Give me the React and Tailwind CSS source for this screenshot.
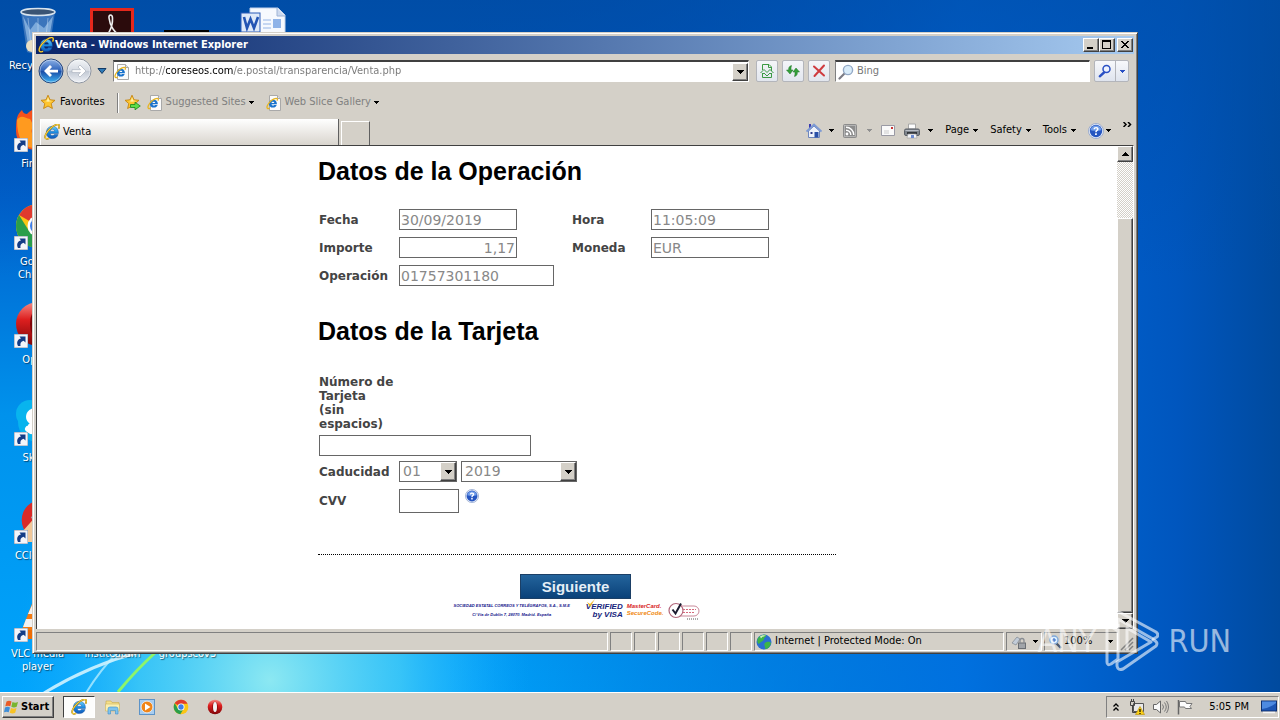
import { useId, useState } from 'react';
import clsx from 'clsx';

const RAISED = 'border border-t-white border-l-white border-r-[#404040] border-b-[#404040] bg-[#d4d0c8] shadow-[inset_-1px_-1px_0_#808080]';
const SUNKEN = 'border border-t-[#808080] border-l-[#808080] border-r-white border-b-white';

const statusBoxes = [1, 2, 3, 4, 5, 6];

const commandMenus = ['Page', 'Safety', 'Tools'];

function Arrow({ className = 'text-black' }) {
    return (
        <svg className={clsx('w-[5px] h-[3px] shrink-0', className)} viewBox="0 0 5 3" fill="currentColor" shapeRendering="crispEdges">
            <path d="M0 0h5v1H4v1H3v1H2V2H1V1H0z" />
        </svg>
    );
}

function IeLogo({ size = 16 }) {
    const id = useId();
    return (
        <svg width={size} height={size} viewBox="0 0 16 16" className="shrink-0">
            <defs>
                <linearGradient id={id} x1="0" y1="0" x2="0" y2="1">
                    <stop offset="0" stopColor="#6fd0fa" />
                    <stop offset="0.5" stopColor="#1b8be0" />
                    <stop offset="1" stopColor="#1258b8" />
                </linearGradient>
            </defs>
            <path d="M8.4 2.3c3.600 0 6 2.600 6 6.300v.9H6.200c.2 1.300 1 2.100 2.300 2.100.9 0 1.500-.4 1.900-1.100h3.700c-.7 2.500-2.800 4.100-5.700 4.100-3.600 0-6-2.500-6-6.100 0-3.700 2.400-6.200 6-6.200zM6.300 7.200h4.300c-.2-1.200-.9-2-2.100-2s-2 .8-2.200 2z" fill={`url(#${id})`} stroke="#0d4796" strokeWidth="0.4" />
            <path d="M14.600 4.600c.8-1.600 1-3 .2-3.700-1.300-1.100-5 .4-8.300 3.500C2.700 7.900.3 12.200 1.500 14.100c.6.9 2 .8 3.600.1" fill="none" stroke="#8c6a08" strokeWidth="1.7" />
            <path d="M14.600 4.600c.8-1.600 1-3 .2-3.700-1.300-1.100-5 .4-8.300 3.500C2.700 7.900.3 12.200 1.500 14.100c.6.9 2 .8 3.600.1" fill="none" stroke="#f8cf3c" strokeWidth="1.1" />
        </svg>
    );
}

function IePage() {
    return (
        <svg width="16" height="16" viewBox="0 0 16 16" className="shrink-0">
            <path d="M3.500.5h8l3 3v12h-11z" fill="#fbfbfb" stroke="#a9a9a9" />
            <path d="M11.500.5v3h3" fill="#e4e4e4" stroke="#a9a9a9" />
            <path d="M6.800 4.700c2.500 0 4.100 1.600 4.100 4.100v.5H5.500c.1.800.7 1.300 1.500 1.300.5 0 .9-.2 1.200-.6h2.500c-.5 1.700-1.900 2.600-3.800 2.600-2.500 0-4-1.500-4-3.900s1.500-4 3.900-4zM5.500 8h2.800c-.1-.8-.6-1.300-1.300-1.300-.8 0-1.400.5-1.500 1.300z" fill="#1a73cc" />
            <path d="M11 5.800c.5-1.100.5-1.900 0-2.300C9.700 2.800 5.800 4.600 3.500 7.300 1.200 10 .4 12.600 1.500 13.400c.5.300 1.300.1 2.100-.3" fill="none" stroke="#e6b422" strokeWidth="1.300" />
        </svg>
    );
}

function NavArrow({ active, label }) {
    const id = useId();
    return (
        <button type="button" aria-label={label} className="size-[26px] shrink-0">
            <svg width="26" height="26" viewBox="0 0 26 26">
                <defs>
                    <linearGradient id={id} x1="0" y1="0" x2="0" y2="1">
                        <stop offset="0" stopColor={active ? '#8fb2e6' : '#f4f6f8'} />
                        <stop offset="0.48" stopColor={active ? '#2d62ba' : '#d5dae2'} />
                        <stop offset="0.52" stopColor={active ? '#1a4ea8' : '#c2c9d4'} />
                        <stop offset="1" stopColor={active ? '#3fb4f4' : '#f2f4f8'} />
                    </linearGradient>
                </defs>
                <circle cx="13" cy="13" r="12" fill={`url(#${id})`} stroke={active ? '#28477c' : '#8f96a2'} />
                <circle cx="13" cy="13" r="11" fill="none" stroke="#fff" strokeOpacity="0.4" />
                {active
                    ? <path d="M6 13l6-6 2 2-2.500 2.700H20v2.700h-8.500L14 17l-2 2z" fill="#fff" />
                    : <path d="M20 13l-6-6-2 2 2.500 2.700H6v2.700h8.500L12 17l2 2z" fill="#fff" stroke="#aab1bd" strokeWidth="0.7" />}
            </svg>
        </button>
    );
}

function Star({ add }) {
    return (
        <svg width="17" height="17" viewBox="0 0 17 17" className="shrink-0">
            <path d="M8 1.200l2 4.600 5 .5-3.800 3.300 1.200 4.900L8 12l-4.400 2.500 1.200-4.900L1 6.300l5-.5z" fill="#fdc530" stroke="#c58410" strokeWidth="0.9" strokeLinejoin="round" />
            <path d="M8 3l1.200 3.500 3 .5-4.200.8L5 7l2-.5z" fill="#fff1a8" />
            {add && <path d="M6.500 10.500h4.500V8.200l5.300 3.800-5.300 3.800v-2.300H6.500z" fill="#5fdc4a" stroke="#16871b" strokeWidth="0.8" />}
        </svg>
    );
}

function HelpIcon({ size }) {
    return (
        <svg width={size} height={size} viewBox="0 0 16 16" className="shrink-0">
            <circle cx="8" cy="8" r="7.500" fill="#e9eef8" stroke="#8aa0cc" strokeWidth="0.8" />
            <circle cx="8" cy="8" r="6.200" fill="#2555c0" />
            <path d="M2.500 7a5.600 5.600 0 0 1 11 0c-3 1.200-8 1.200-11 0z" fill="#6f9ce8" />
            <path d="M5.500 6.300C5.600 4.700 6.600 4 8.100 4c1.500 0 2.500.8 2.500 2.100 0 1.700-1.900 1.700-1.900 3.200H7.200c0-2 1.700-2.200 1.700-3.200 0-.5-.3-.8-.9-.8s-.9.400-1 1zM7.100 10.300h1.700V12H7.100z" fill="#fff" />
        </svg>
    );
}

function ChromeLogo({ size }) {
    return (
        <svg width={size} height={size} viewBox="0 0 48 48" className="shrink-0">
            <circle cx="24" cy="24" r="22" fill="#fbc514" />
            <path d="M24 24L5 13a22 22 0 0 1 38.500 1H24z" fill="#e03a2e" />
            <path d="M5 13a22 22 0 0 0 17 32.900L32 29l-17 0z" fill="#2a9e4b" />
            <circle cx="24" cy="24" r="10.500" fill="#fff" />
            <circle cx="24" cy="24" r="8" fill="#3f7ee8" />
        </svg>
    );
}

function OperaLogo({ size }) {
    const id = useId();
    return (
        <svg width={size} height={size} viewBox="0 0 48 48" className="shrink-0">
            <defs>
                <linearGradient id={id} x1="0" y1="0" x2="0" y2="1">
                    <stop offset="0" stopColor="#f58a84" />
                    <stop offset="0.4" stopColor="#dd1f1f" />
                    <stop offset="1" stopColor="#7d0508" />
                </linearGradient>
            </defs>
            <ellipse cx="24" cy="24" rx="22" ry="22" fill={`url(#${id})`} />
            <ellipse cx="24" cy="24" rx="8" ry="16" fill="#7d0508" />
            <ellipse cx="24" cy="24" rx="6" ry="15" fill="#f4f4f4" />
        </svg>
    );
}

const desktopArt = {
    bin: (
        <svg viewBox="0 0 48 48" className="size-12">
            <path d="M7 6l6 40c6 2 16 2 22 0l6-40z" fill="#4a7fc0" fillOpacity="0.8" />
            <path d="M9 10l6 34c5 2 13 2 18 0l6-34-9 12-8-6-6 8z" fill="#a9cdf0" fillOpacity="0.6" />
            <ellipse cx="24" cy="6" rx="17" ry="3.500" fill="#3a5474" stroke="#d8e4ee" strokeWidth="1.500" />
            <path d="M14 12l3 28M24 12v30M34 12l-3 28" stroke="#e4f1fc" strokeOpacity="0.4" />
            <circle cx="18" cy="40" r="6" fill="#e8dfc4" />
        </svg>
    ),
    acrobat: (
        <svg viewBox="0 0 48 48" className="size-12">
            <rect x="1" y="2" width="44" height="44" fill="#e5281c" />
            <rect x="4" y="5" width="38" height="41" fill="#2b0b0c" />
            <path d="M13 34c5-3 11-12 10.500-22-.2-4-4-4-3.500 0 .8 8 6 16 13 18 3 .8 3-2 0-2-8 0-15 2-20 6z" fill="none" stroke="#eee" strokeWidth="1.600" />
        </svg>
    ),
    black: (
        <svg viewBox="0 0 48 48" className="size-12">
            <rect x="0" y="24" width="45" height="24" fill="#000" />
        </svg>
    ),
    word: (
        <svg viewBox="0 0 48 48" className="size-12">
            <path d="M11 2h28l7 7v39H11z" fill="#f6f9fe" stroke="#c5d3ea" />
            <path d="M38 2v8h8" fill="#ccd9ee" stroke="#9fb4d6" />
            <path d="M24 14h8M24 18h8M24 22h8" stroke="#b6cbee" strokeWidth="1.500" />
            <rect x="34" y="13" width="8" height="9" fill="#8fb3e8" />
            <rect x="2" y="7" width="19" height="19" fill="#dfe9f8" stroke="#2c5cb8" />
            <path d="M5 11l3 11 3.500-9 3.500 9 4-11" fill="none" stroke="#2455b4" strokeWidth="2.600" />
        </svg>
    ),
    firefox: (
        <svg viewBox="0 0 48 48" className="size-12">
            <path d="M3 14c1-4 3-6 5-8 1 3 3 4 5 4 5-6 14-8 22-4 8 4 12 12 10 22-2 11-11 18-22 18C10 46 2 38 2 27c0-5 0-9 1-13z" fill="#f4511e" />
            <path d="M3 16c4-6 8-2 13-1 2 3 2 6 6 7-5 1-6 6-2 10 5 4 12 3 16-2-1 9-8 15-17 14C9 43 3 34 3 16z" fill="#ff9a1f" />
            <path d="M22 12c8-3 17 3 18 12-3-3-6-4-9-3 1-4-3-8-9-9z" fill="#6f35b8" />
        </svg>
    ),
    chrome: <ChromeLogo size={48} />,
    opera: <OperaLogo size={48} />,
    skype: (
        <svg viewBox="0 0 48 48" className="size-12">
            <circle cx="16" cy="16" r="14" fill="#08b4ee" />
            <circle cx="31" cy="31" r="15" fill="#08b4ee" />
            <circle cx="24" cy="24" r="20" fill="#08b4ee" />
            <path d="M34 16c-5-6-19-5-19 3 0 8 17 4 17 10 0 5-10 5-15-1M14 31l3 2" fill="none" stroke="#fff" strokeWidth="6" strokeLinecap="round" />
        </svg>
    ),
    ccleaner: (
        <svg viewBox="0 0 48 48" className="size-12">
            <path d="M42 10A20 20 0 1 0 42 38l-8-7a9 9 0 1 1 0-14z" fill="#d92a27" />
            <path d="M24 18l6 8-7 8 4 12H10L8 36z" fill="#f1c89a" />
            <path d="M20 16l8 6-2 4-9-4z" fill="#9cb9d8" />
        </svg>
    ),
    vlc: (
        <svg viewBox="0 0 48 48" className="size-12">
            <path d="M21 2h6l14 36H7z" fill="#f47b11" />
            <path d="M18 11h12l4 9H14zM12 25h24l3 8H9z" fill="#f2f2f2" />
            <path d="M4 36h40v9H4z" fill="#ee6c05" />
        </svg>
    )
};

const desktopIcons = [
    { art: 'bin', label: 'Recycle Bin', cell: 'col-start-1 row-start-1' },
    { art: 'firefox', label: 'Firefox', cell: 'col-start-1 row-start-2', shortcut: true },
    { art: 'chrome', label: 'Google Chrome', cell: 'col-start-1 row-start-3', shortcut: true },
    { art: 'opera', label: 'Opera', cell: 'col-start-1 row-start-4', shortcut: true },
    { art: 'skype', label: 'Skype', cell: 'col-start-1 row-start-5', shortcut: true },
    { art: 'ccleaner', label: 'CCleaner', cell: 'col-start-1 row-start-6', shortcut: true },
    { art: 'vlc', label: 'VLC media player', cell: 'col-start-1 row-start-7', shortcut: true },
    { art: 'acrobat', cell: 'col-start-2 row-start-1' },
    { label: 'institcatum', cell: 'col-start-2 row-start-7' },
    { art: 'black', cell: 'col-start-3 row-start-1' },
    { label: 'groupscov3', cell: 'col-start-3 row-start-7' },
    { art: 'word', cell: 'col-start-4 row-start-1' }
];

function DesktopIcon({ icon }) {
    return (
        <div className={clsx('relative flex flex-col items-center', icon.cell)}>
            <div className="size-12">{icon.art && desktopArt[icon.art]}</div>
            {icon.shortcut && (
                <svg viewBox="0 0 14 14" className="absolute left-[14px] top-[34px] size-[14px]">
                    <path d="M0 0h14v14H0z" fill="#f3f5fa" stroke="#8a94a8" />
                    <path d="M4 12c-2-4 0-7 3-7.500L5.500 2.500h6v6L9.600 6.800C7 7.500 6 9 6.500 12z" fill="#143c86" />
                </svg>
            )}
            <span className="mt-[5px] w-16 text-center text-white leading-[13px] [text-shadow:1px_1px_1px_#0008]">{icon.label}</span>
        </div>
    );
}

function Wallpaper() {
    return (
        <svg className="absolute inset-0 size-full" viewBox="0 0 1280 692" preserveAspectRatio="none">
            <defs>
                <linearGradient id="sky" x1="0" y1="0" x2="0" y2="1">
                    <stop offset="0" stopColor="#004ca6" />
                    <stop offset="0.28" stopColor="#0060cc" />
                    <stop offset="0.6" stopColor="#0092ec" />
                    <stop offset="1" stopColor="#00a4fc" />
                </linearGradient>
                <linearGradient id="dusk" x1="0" y1="0" x2="1" y2="0">
                    <stop offset="0.35" stopColor="#0048b0" stopOpacity="0" />
                    <stop offset="0.75" stopColor="#0064d8" stopOpacity="0.8" />
                    <stop offset="0.92" stopColor="#0056be" />
                    <stop offset="1" stopColor="#004a9e" />
                </linearGradient>
                <linearGradient id="top" x1="0" y1="0" x2="0" y2="1">
                    <stop offset="0" stopColor="#004ea8" stopOpacity="0.6" />
                    <stop offset="0.4" stopColor="#004ea8" stopOpacity="0" />
                </linearGradient>
                <radialGradient id="glow" gradientUnits="userSpaceOnUse" cx="270" cy="680" r="260">
                    <stop offset="0" stopColor="#8ce8f2" />
                    <stop offset="0.5" stopColor="#4fd2f6" stopOpacity="0.7" />
                    <stop offset="1" stopColor="#18a8ff" stopOpacity="0" />
                </radialGradient>
            </defs>
            <rect width="1280" height="692" fill="url(#sky)" />
            <rect width="1280" height="692" fill="url(#dusk)" />
            <rect width="1280" height="692" fill="url(#top)" />
            <rect width="1280" height="692" fill="url(#glow)" />
            <path d="M44 693Q90 665 140 652" fill="none" stroke="#e8fbff" strokeWidth="3" strokeOpacity="0.8" />
            <path d="M86 693Q100 670 118 652" fill="none" stroke="#c8f4ff" strokeWidth="2" strokeOpacity="0.7" />
            <path d="M118 692Q136 670 156 652" fill="none" stroke="#8df56a" strokeWidth="3" />
        </svg>
    );
}

function Field({ label, value, width, align }) {
    const id = useId();
    return (
        <>
            <label htmlFor={id} className="pl-px">{label}</label>
            <div>
                <input
                    id={id}
                    defaultValue={value}
                    readOnly
                    className={clsx('h-[21px] border border-[#666] bg-white px-px text-[14px] font-normal text-[#888] outline-none', width, align)}
                />
            </div>
        </>
    );
}

function Dropdown({ id, label, options, width }) {
    return (
        <div className={clsx('flex h-[21px] border border-[#666] bg-white', width)}>
            <select id={id} aria-label={label} className="min-w-0 flex-1 appearance-none pl-[3px] text-[14px] font-normal leading-[19px] text-[#888] outline-none">
                {options.map(o => <option key={o}>{o}</option>)}
            </select>
            <span className={clsx('flex w-4 items-center justify-center', RAISED)}>
                <svg className="h-1 w-[7px]" viewBox="0 0 7 4" shapeRendering="crispEdges"><path d="M0 0h7v1H6v1H5v1H4v1H3V3H2V2H1V1H0z" /></svg>
            </span>
        </div>
    );
}

function PaymentPage() {
    const [card, setCard] = useState('');
    const [cvv, setCvv] = useState('');

    return (
        <main className="flex-1 overflow-hidden bg-white pt-[9px] text-[#444]">
            <form onSubmit={e => e.preventDefault()} className="mx-auto w-[518px] max-w-full font-['DejaVu_Sans',sans-serif] text-[12px] font-bold leading-[14px]">
                <h1 className="font-['Liberation_Sans',sans-serif] text-[25px] font-bold leading-[32px] text-black">Datos de la Operación</h1>
                <div className="mt-[22px] grid grid-cols-[81px_172px_80px_118px] items-center gap-y-[7px]">
                    <Field label="Fecha" value="30/09/2019" width="w-[118px]" />
                    <Field label="Hora" value="11:05:09" width="w-[118px]" />
                    <Field label="Importe" value="1,17" width="w-[118px]" align="text-right" />
                    <Field label="Moneda" value="EUR" width="w-[118px]" />
                    <Field label="Operación" value="01757301180" width="w-[155px]" />
                </div>

                <h1 className="mt-[29px] font-['Liberation_Sans',sans-serif] text-[25px] font-bold leading-[32px] text-black">Datos de la Tarjeta</h1>
                <div className="mt-[28px] flex flex-col items-start pl-px">
                    <label htmlFor="card" className="w-[75px]">Número de Tarjeta (sin espacios)</label>
                    <input
                        id="card"
                        value={card}
                        onChange={e => setCard(e.target.value)}
                        autoFocus
                        className="mt-1 h-[21px] w-[212px] border border-[#666] px-px text-[14px] font-normal outline-none"
                    />
                    <div className="mt-[5px] flex items-center">
                        <label htmlFor="month" className="w-[80px]">Caducidad</label>
                        <Dropdown id="month" label="Mes" options={['01', '02', '03', '04', '05', '06', '07', '08', '09', '10', '11', '12']} width="w-[58px]" />
                        <div className="w-1" />
                        <Dropdown id="year" label="Año" options={['2019', '2020', '2021', '2022', '2023']} width="w-[116px]" />
                    </div>
                    <div className="mt-[7px] flex items-start">
                        <label htmlFor="cvv" className="w-[80px] leading-[24px]">CVV</label>
                        <input
                            id="cvv"
                            value={cvv}
                            onChange={e => setCvv(e.target.value)}
                            className="h-6 w-[60px] border border-[#666] px-px text-[14px] font-normal outline-none"
                        />
                        <button type="button" aria-label="CVV" className="ml-[6px]"><HelpIcon size={14} /></button>
                    </div>
                </div>

                <div className="mt-[41px] border-t border-dotted border-black pt-[19px] pr-[3px] text-center">
                    <button type="submit" className="h-[25px] w-[111px] border border-[#1b3f66] bg-linear-to-b from-[#23649c] to-[#0a4179] font-['Liberation_Sans',sans-serif] text-[15px] font-bold text-[#e4eef6]">Siguiente</button>
                </div>
                <div className="flex h-6 items-start justify-center font-['Liberation_Sans',sans-serif] italic">
                    <p className="mt-[2px] whitespace-nowrap text-center text-[4px] leading-[9px] text-[#14148c]">
                        SOCIEDAD ESTATAL CORREOS Y TELÉGRAFOS, S.A., S.M.E<br />C/ Vía de Dublín 7, 28070. Madrid. España
                    </p>
                    <div className="relative ml-4 mt-1 text-right text-[8px] leading-[8px] text-[#16247c]">
                        <svg viewBox="0 0 10 8" className="absolute -top-1 left-0 w-[10px] h-2"><path d="M1 3l3 2 5-5-5 8z" fill="#f3b51b" /></svg>
                        <p>VERIFIED</p>
                        <p>by VISA</p>
                    </div>
                    <div className="ml-1 mt-1 text-[6px] leading-[7px]">
                        <p className="text-[#d81e1e]">MasterCard.</p>
                        <p className="text-[#f08a12]">SecureCode.</p>
                    </div>
                    <svg viewBox="0 0 32 20" className="ml-[5px] mt-[2px] h-5 w-8">
                        <rect x="6" y="5" width="25" height="10" rx="5" fill="#fff" stroke="#c98a9a" />
                        <circle cx="8" cy="9.500" r="7" fill="#fff" stroke="#b2687c" strokeWidth="1.200" />
                        <path d="M4.500 8.500l3 4L13 2.500" fill="none" stroke="#1c1c30" strokeWidth="2" />
                        <path d="M15 8.500h13M15 11.500h11" stroke="#d56a7d" strokeDasharray="2 1" />
                        <path d="M19 18h12" stroke="#555" strokeDasharray="1 1" />
                    </svg>
                </div>
            </form>
        </main>
    );
}

function Scrollbar() {
    return (
        <div className="flex w-4 shrink-0 flex-col bg-[repeating-conic-gradient(#fff_0_25%,#d4d0c8_0_50%)] bg-size-[2px_2px]">
            <button type="button" aria-label="Scroll up" className={clsx('flex h-4 items-center justify-center', RAISED)}>
                <svg className="h-1 w-[7px]" viewBox="0 0 7 4" shapeRendering="crispEdges"><path d="M3 0h1v1h1v1h1v1h1v1H0V3h1V2h1V1h1z" /></svg>
            </button>
            <div className={clsx('mt-[56px] flex-1', RAISED)} />
            <button type="button" aria-label="Scroll down" className={clsx('flex h-4 items-center justify-center', RAISED)}>
                <svg className="h-1 w-[7px]" viewBox="0 0 7 4" shapeRendering="crispEdges"><path d="M0 0h7v1H6v1H5v1H4v1H3V3H2V2H1V1H0z" /></svg>
            </button>
        </div>
    );
}

function TitleBar() {
    return (
        <div className="flex h-[18px] items-center bg-linear-to-r from-[#0a246a] to-[#a6caf0] pl-[2px] pr-px">
            <IeLogo />
            <h2 className="ml-px flex-1 text-[11px] font-bold text-white">Venta - Windows Internet Explorer</h2>
            <button type="button" aria-label="Minimize" className={clsx('h-[14px] w-4', RAISED)}>
                <svg viewBox="0 0 14 12" className="h-3 w-[14px]" shapeRendering="crispEdges"><path d="M3 8h6v2H3z" /></svg>
            </button>
            <button type="button" aria-label="Maximize" className={clsx('h-[14px] w-4', RAISED)}>
                <svg viewBox="0 0 14 12" className="h-3 w-[14px]" shapeRendering="crispEdges"><path d="M2 1h9v9H2zM3 3v6h7V3z" fillRule="evenodd" /></svg>
            </button>
            <button type="button" aria-label="Close" className={clsx('ml-[2px] h-[14px] w-4', RAISED)}>
                <svg viewBox="0 0 14 12" className="h-3 w-[14px]" shapeRendering="crispEdges"><path d="M3 2h2v1h1v1h2V3h1V2h2v1h-1v1H9v1H8v1h1v1h1v1h1v1H9V8H8V7H6v1H5v1H3V8h1V7h1V6h1V5H5V4H4V3H3z" /></svg>
            </button>
        </div>
    );
}

function ToolButton({ label, children }) {
    return (
        <button type="button" aria-label={label} className="flex size-[22px] shrink-0 items-center justify-center rounded-xs border border-[#b3b5bb] bg-linear-to-b from-[#f4f5f8] to-[#e2e6ee]">
            {children}
        </button>
    );
}

function NavBar() {
    return (
        <div className="flex h-[34px] items-center pl-[2px] pr-[5px]">
            <NavArrow active label="Back" />
            <div className="w-[2px]" />
            <NavArrow label="Forward" />
            <svg viewBox="0 0 10 6" className="mx-[5px] h-[6px] w-[10px] shrink-0"><path d="M1 .5h8L5 5.500z" fill="#2f7bb8" stroke="#123a66" /></svg>
            <div className="ml-px flex h-[22px] flex-1 items-center border border-t-2 border-[#808080] border-t-[#404040] border-r-white border-b-white bg-white">
                <IePage />
                <input
                    type="text"
                    aria-label="Address"
                    defaultValue="http://coreseos.com/e.postal/transparencia/Venta.php"
                    className="ml-[5px] min-w-0 flex-1 bg-[linear-gradient(90deg,#777_31px,#000_31px,#000_98px,#777_98px)] bg-clip-text text-transparent outline-none"
                />
                <button type="button" aria-label="Address history" className={clsx('flex h-[18px] w-4 items-center justify-center', RAISED)}>
                    <svg className="h-1 w-[7px]" viewBox="0 0 7 4" shapeRendering="crispEdges"><path d="M0 0h7v1H6v1H5v1H4v1H3V3H2V2H1V1H0z" /></svg>
                </button>
            </div>
            <div className="ml-[7px] flex gap-1">
                <ToolButton label="Compatibility View">
                    <svg viewBox="0 0 14 14" className="size-[14px]"><path d="M2.500 6V.5h6.500l2.500 2.500V7M8.500.5v3h3M2.500 9v4.500h9V9M.5 9l3.500-3.500L7 8.500l3-3 3.500 3.500M2 11l2-2 3 3 3-3 2 2" fill="none" stroke="#3c9a44" /></svg>
                </ToolButton>
                <ToolButton label="Refresh">
                    <svg viewBox="0 0 16 14" className="h-[14px] w-4"><path d="M6.500 1.500C4 2 3.500 4 3.700 6H1.500L5 10l3-4H6c-.1-1.500 0-3 .5-4.500zM9.500 12.500C12 12 12.500 10 12.300 8h2.200L11 4 8 8h2c.1 1.500 0 3-.5 4.500z" fill="#35a03a" stroke="#1c7525" strokeWidth="0.500" /></svg>
                </ToolButton>
                <ToolButton label="Stop">
                    <svg viewBox="0 0 14 14" className="size-[14px]"><path d="M2 2.500l10 9M12 1.500L2.500 12" stroke="#cf3b3f" strokeWidth="2" strokeLinecap="round" /></svg>
                </ToolButton>
            </div>
            <div className="ml-[5px] flex h-[22px] w-[255px] items-center border border-t-2 border-[#808080] border-t-[#404040] border-r-white border-b-white bg-white pl-[2px]">
                <svg viewBox="0 0 16 16" className="size-4 shrink-0">
                    <path d="M6.500 9.500L1.500 14.500" stroke="#7c7c84" strokeWidth="2.200" strokeLinecap="round" />
                    <circle cx="10" cy="6" r="4.600" fill="#d9ecf9" stroke="#93a9c6" strokeWidth="1.400" />
                </svg>
                <input type="text" aria-label="Search" placeholder="Bing" className="ml-[3px] min-w-0 flex-1 outline-none placeholder:text-[#777]" />
            </div>
            <div className="ml-1 flex h-[22px] rounded-xs border border-[#b3b5bb] bg-linear-to-b from-[#f7f8fb] to-[#dfe4ee]">
                <button type="button" aria-label="Run search" className="flex w-5 items-center justify-center">
                    <svg viewBox="0 0 14 14" className="size-[14px]"><path d="M6 8.500L1.800 12.300" stroke="#2a50c4" strokeWidth="2.400" strokeLinecap="round" /><circle cx="8.500" cy="5" r="3.500" fill="#eef3ff" stroke="#2a50c4" strokeWidth="1.500" /></svg>
                </button>
                <button type="button" aria-label="Search options" className="flex w-[13px] items-center justify-center border-l border-[#b3b5bb]"><Arrow className="text-[#2a50c4]" /></button>
            </div>
        </div>
    );
}

function FavoritesBar() {
    return (
        <div className="flex h-[28px] items-center pl-1 pt-px">
            <button type="button" className="flex items-center gap-[3px]"><Star />Favorites</button>
            <div className="ml-[12px] h-5 w-[2px] border-l border-r border-l-[#808080] border-r-white" />
            <button type="button" aria-label="Add to favorites" className="ml-[5px]"><Star add /></button>
            <button type="button" className="ml-[6px] flex items-center gap-[3px] text-[#808080]"><IePage />Suggested Sites<Arrow /></button>
            <button type="button" className="ml-[12px] flex items-center gap-[3px] text-[#808080]"><IePage />Web Slice Gallery<Arrow /></button>
        </div>
    );
}

function TabBar() {
    return (
        <div className="flex h-[29px] items-end justify-between pl-1">
            <div className="flex items-end gap-[2px]">
                <button type="button" className="flex h-[26px] w-[299px] items-center border-r border-[#606060] bg-linear-to-b from-white to-[#d9d5ce] pl-1 shadow-[inset_1px_1px_0_#fff]"><IeLogo /><span className="ml-[3px]">Venta</span></button>
                <button type="button" aria-label="New tab" className="h-[24px] w-[29px] border border-b-0 border-t-white border-l-white border-r-[#606060]" />
            </div>
            <div className="flex h-full items-center gap-3 pr-[2px]">
                <div className="flex items-center gap-[9px]">
                    <button type="button" aria-label="Home" className="flex items-center gap-[7px]">
                        <svg viewBox="0 0 16 16" className="size-4">
                            <path d="M3 1h2v4H3z" fill="#3a3ab0" />
                            <path d="M2.500 8v6.500h11V8L8 3z" fill="#eef2fb" stroke="#6e86bc" />
                            <path d="M.5 8.500L8 1.500l7.500 7" fill="none" stroke="#7d9ad4" strokeWidth="1.800" />
                            <path d="M8.500 9h4v5.500h-4z" fill="#2a50a8" />
                            <path d="M4.500 9h2v2h-2z" fill="#2a3a8c" />
                        </svg>
                        <Arrow />
                    </button>
                    <button type="button" aria-label="Feeds" className="flex items-center gap-[10px]">
                        <svg viewBox="0 0 14 14" className="size-[14px]">
                            <rect width="14" height="14" rx="2" fill="#8c8c8c" />
                            <rect x="1.500" y="1.500" width="11" height="11" fill="none" stroke="#c4c4c4" strokeWidth="0.700" />
                            <circle cx="4" cy="10" r="1.400" fill="#fff" />
                            <path d="M3 6.200A4.800 4.800 0 0 1 7.800 11M3 3.200A7.800 7.800 0 0 1 10.800 11" fill="none" stroke="#fff" strokeWidth="1.400" />
                        </svg>
                        <Arrow className="text-[#909090]" />
                    </button>
                    <button type="button" aria-label="Mail">
                        <svg viewBox="0 0 14 11" className="h-[11px] w-[14px]"><path d="M.5.500h13v10H.5z" fill="#fafafa" stroke="#9a9aa4" /><path d="M10 2h2v2h-2z" fill="#c93434" /><path d="M3 6h5M3 8h5" stroke="#ccc" /></svg>
                    </button>
                    <button type="button" aria-label="Print" className="flex items-center gap-2">
                        <svg viewBox="0 0 16 16" className="size-4">
                            <path d="M4.500 1h7v5h-7z" fill="#fdfdfd" stroke="#a8a8a8" />
                            <rect x="0.500" y="6" width="15" height="6.500" rx="1.500" fill="#7f858c" stroke="#5c6168" />
                            <path d="M1.500 7.500h13" stroke="#b9bec6" />
                            <path d="M3 9h10v2H3z" fill="#33373c" />
                            <path d="M4 11h8l1 4H3z" fill="#f4f6fa" stroke="#9b9b9b" strokeWidth="0.600" />
                            <path d="M7 12h3v3H7z" fill="#6c8bd0" />
                        </svg>
                        <Arrow />
                    </button>
                </div>
                {commandMenus.map(name => (
                    <button key={name} type="button" className="flex items-center gap-[4px]">{name}<Arrow /></button>
                ))}
                <button type="button" aria-label="Help" className="flex items-center gap-[2px]"><HelpIcon size={16} /><Arrow /></button>
                <button type="button" aria-label="More commands" className="mb-3">
                    <svg viewBox="0 0 9 5" className="h-[5px] w-[9px]"><path d="M.5 0L3 2.500.5 5M5 0l2.500 2.500L5 5" fill="none" stroke="#000" strokeWidth="1.500" /></svg>
                </button>
            </div>
        </div>
    );
}

function StatusBar() {
    return (
        <div className="flex h-[19px] gap-[2px]">
            <div className={clsx('flex-1', SUNKEN)} />
            {statusBoxes.map(n => <div key={n} className={clsx('w-[22px]', SUNKEN)} />)}
            <div className={clsx('flex w-[250px] items-center gap-[3px] pl-px', SUNKEN)}>
                <svg viewBox="0 0 16 16" className="size-4">
                    <circle cx="8" cy="8" r="7.500" fill="#2a6fd2" />
                    <path d="M2 4c2-3 6-4 8-3 1 2-2 2-2 4S4 8 3 10C1 9 1 6 2 4zM9 9c3-2 5-1 6 0-1 4-3 6-6 6 1-2-2-4 0-6z" fill="#3db547" />
                    <path d="M4 2.500c2-1.500 5-1.500 6-.5-2 0-4 1-5 2.500z" fill="#d4f0c0" />
                </svg>
                Internet | Protected Mode: On
            </div>
            <button type="button" aria-label="Filtering" className={clsx('flex w-[36px] items-center justify-center gap-[6px]', SUNKEN)}>
                <svg viewBox="0 0 16 16" className="size-4">
                    <path d="M1 9L6 3l3 2-4 6z" fill="#c2ccd8" stroke="#7c858f" strokeWidth="0.700" />
                    <rect x="7.500" y="9" width="7" height="5.500" fill="#a0a4a9" stroke="#6b6f74" />
                    <path d="M9 9V6.500a2 2 0 0 1 4 0V9" fill="none" stroke="#888c92" strokeWidth="1.300" />
                </svg>
                <Arrow />
            </button>
            <button type="button" className={clsx('flex w-[74px] items-center gap-[1px] pl-[2px]', SUNKEN)}>
                <svg viewBox="0 0 16 16" className="size-4 shrink-0">
                    <path d="M9 9l5 5" stroke="#4c586c" strokeWidth="2.400" />
                    <circle cx="7" cy="6" r="4" fill="#dcefff" stroke="#7fa8d8" strokeWidth="1.400" />
                    <path d="M5 6h4M7 4v4" stroke="#2b67c4" />
                </svg>
                <span className="flex-1 text-left">100%</span>
                <span className="pr-1"><Arrow /></span>
            </button>
            <svg viewBox="0 0 14 19" className="h-[19px] w-[14px]"><path d="M1 18L13 6M5 18l8-8M9 18l4-4" stroke="#808080" strokeWidth="1.500" /></svg>
        </div>
    );
}

function Taskbar() {
    return (
        <footer className="flex h-[28px] items-center border-t border-white bg-[#d4d0c8] pl-[2px] pr-px pt-px shadow-[0_-1px_0_#d4d0c8]">
            <button type="button" className={clsx('flex h-[22px] w-[52px] items-center gap-px pl-px font-bold', RAISED)}>
                <svg viewBox="0 0 16 16" className="size-4 shrink-0">
                    <path d="M2.500 2.500c2-1 3.500-.8 5 0L6.300 7.300c-1.500-.8-3-.8-5 0z" fill="#ea5b25" />
                    <path d="M8.500 3c2 .9 3.500.8 5.500 0l-1.300 4.800c-2 .9-3.600.8-5.400 0z" fill="#79b52f" />
                    <path d="M1 8.500c2-.9 3.500-.8 5 0l-1.300 4.800c-1.500-.8-3-.8-4.700 0z" fill="#3f8ed8" />
                    <path d="M7 9c2 .9 3.500.8 5.500 0l-1.300 4.800c-2 .9-3.600.8-5.400 0z" fill="#f8c325" />
                </svg>
                Start
            </button>
            <button type="button" aria-label="Internet Explorer" className="ml-[9px] flex h-[22px] w-[32px] items-center justify-center border border-[#404040] border-r-white border-b-white bg-[#fdfdfc]"><IeLogo /></button>
            <div className="ml-[10px] flex items-center gap-[18px]">
                <button type="button" aria-label="Windows Explorer">
                    <svg viewBox="0 0 16 16" className="size-4">
                        <path d="M1 2h5l1 1.500h7V7H1z" fill="#f6e08a" stroke="#c8a94b" strokeWidth="0.600" />
                        <path d="M.500 5h14v7H.5z" fill="#fbefb0" stroke="#cdb25a" strokeWidth="0.600" />
                        <path d="M3 15V10q0-2 2-2h6q2 0 2 2v5h-2.500v-3.500h-5V15z" fill="#7fc3ee" stroke="#3c8fc9" strokeWidth="0.600" />
                    </svg>
                </button>
                <button type="button" aria-label="Media Player">
                    <svg viewBox="0 0 16 16" className="size-4">
                        <rect x="0.500" y="0.500" width="15" height="15" fill="#a8cdf0" stroke="#5c93c8" />
                        <circle cx="8" cy="8" r="5.800" fill="#f08519" stroke="#fff" strokeWidth="0.600" />
                        <path d="M6 4.500v7L11.500 8z" fill="#fff" />
                    </svg>
                </button>
                <button type="button" aria-label="Google Chrome"><ChromeLogo size={16} /></button>
                <button type="button" aria-label="Opera"><OperaLogo size={16} /></button>
            </div>
            <div className={clsx('ml-auto flex h-[22px] items-center gap-2 pl-[6px] pr-px', SUNKEN)}>
                <svg viewBox="0 0 6 8" className="h-2 w-[6px]"><path d="M.5 3.500L3 1l2.500 2.500M.5 7.500L3 5l2.500 2.500" fill="none" stroke="#000" strokeWidth="1.300" /></svg>
                <svg viewBox="0 0 16 16" className="ml-[2px] size-4">
                    <path d="M4.500 4.500h10v8h-10z" fill="#e9e9e9" stroke="#555" />
                    <path d="M1.500 2.500h4v4h-4zM2.500 0v2M4.500 0v2M3.500 6.500v7h4" fill="none" stroke="#444" />
                    <path d="M11 7.500l4.500 8h-9z" fill="#fcd116" stroke="#b58a00" strokeWidth="0.600" />
                    <path d="M11 10v3M11 14v1" stroke="#000" strokeWidth="1.200" />
                </svg>
                <svg viewBox="0 0 16 16" className="size-4"><path d="M.5 5.500h3L7.500 2v12l-4-3.500h-3z" fill="#fafafa" stroke="#666" /><path d="M9.500 5.500q2 2.500 0 5M11.500 3.500q3.500 4.500 0 9M13.500 2q4 6 0 12" fill="none" stroke="#777" /></svg>
                <svg viewBox="0 0 16 16" className="size-4"><path d="M1.500 1v14.500" stroke="#666" strokeWidth="1.500" /><path d="M2.500 2.500h6l1 2h5.500l-2 3 1.500 2H8.500l-1-1.500h-5z" fill="#fdfdfd" stroke="#777" /></svg>
                <time className="ml-2">5:05 PM</time>
                <button type="button" aria-label="Show desktop" className="ml-1">
                    <svg viewBox="0 0 16 16" className="size-4"><rect x="0.500" y="2" width="15" height="10" fill="#1d56b4" stroke="#0c2f70" /><path d="M1 10Q9 9 15 4V2.500H1z" fill="#4d8ae0" /><path d="M2 13.500h12" stroke="#f4f4f4" strokeWidth="1.500" /></svg>
                </button>
            </div>
        </footer>
    );
}

function Watermark() {
    return (
        <div className="pointer-events-none absolute right-[49px] bottom-[19px] z-10 flex h-[64px] items-center gap-[9px] text-[32px] leading-none text-white/60">
            <span>ANY</span>
            <svg viewBox="0 0 54 62" className="h-[62px] w-[54px]" fill="none" stroke="#fff" strokeOpacity="0.6" strokeWidth="3" strokeLinejoin="round">
                <path d="M13 21L2 14v38q0 4 4 2l7-5zM13 14v35" />
                <path d="M10 5q2-4 6-2l35 19q3 2 1 5l-4 2L13 9v8" />
                <path d="M47 29q7 3 4 7L18 59q-5 2-6-3v-4l34-20L22 18v22" />
            </svg>
            <span>RUN</span>
        </div>
    );
}

export default function App() {
    return (
        <div className="flex h-screen flex-col overflow-hidden font-['DejaVu_Sans_Condensed','DejaVu_Sans',sans-serif] text-[11px] text-black">
            <div className="relative flex-1 overflow-hidden">
                <Wallpaper />
                <div className="relative grid auto-cols-[75px] grid-rows-[repeat(7,98px)] pt-[6px]">
                    {desktopIcons.map((icon, i) => <DesktopIcon key={i} icon={icon} />)}
                </div>

                {/* Internet Explorer window */}
                <section className="absolute top-8 right-[142px] bottom-[38px] left-8 flex flex-col border border-[#d4d0c8] border-r-[#404040] border-b-[#404040] bg-[#d4d0c8] p-[3px] pb-[2px] shadow-[inset_1px_1px_0_#fff,inset_-1px_-1px_0_#808080]">
                    <TitleBar />
                    <NavBar />
                    <FavoritesBar />
                    <TabBar />
                    <div className="flex min-h-0 flex-1 border-t border-l border-[#404040] border-r border-r-white">
                        <PaymentPage />
                        <Scrollbar />
                    </div>
                    <div className="h-[3px]" />
                    <StatusBar />
                </section>
                <Watermark />
            </div>
            <Taskbar />
        </div>
    );
}
